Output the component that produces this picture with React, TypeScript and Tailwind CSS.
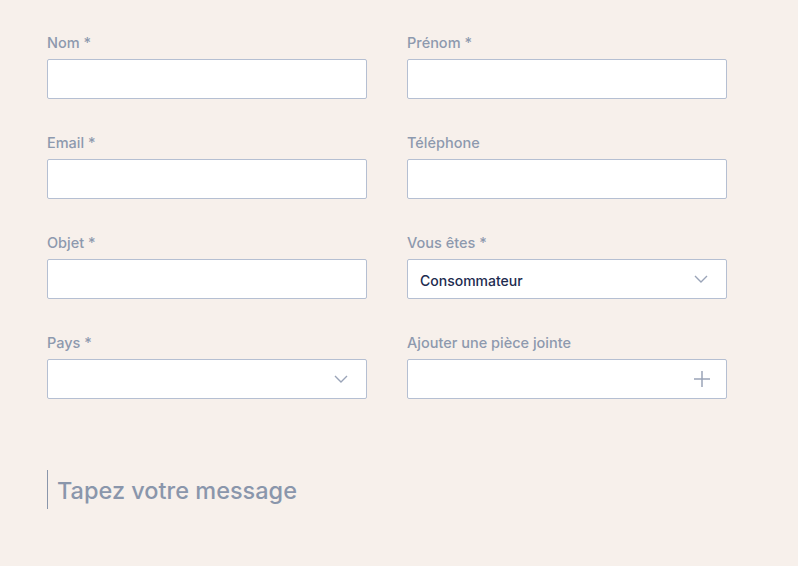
import React from "react";

const labelCls = "block h-5 mb-1.5 text-[14.5px] leading-5 font-medium text-[#8d99ae]";
const boxCls =
  "h-10 w-full bg-white border border-[#b5bfd2] rounded-[2px] flex items-center px-3";

function Field({ label, children }: { label: string; children?: React.ReactNode }) {
  return (
    <div className="flex flex-col">
      <span className={labelCls}>{label}</span>
      {children ?? <div className={boxCls} />}
    </div>
  );
}

function Chevron() {
  return (
    <svg width="14" height="8" viewBox="0 0 14 8" fill="none" className="ml-auto mr-[6px]">
      <path d="M1 1l6 6 6-6" stroke="#9aa4b8" strokeWidth="1.4" />
    </svg>
  );
}

function Plus() {
  return (
    <svg width="16" height="16" viewBox="0 0 16 16" fill="none" className="ml-auto mr-[4px]">
      <path d="M8 0v16M0 8h16" stroke="#9aa4b8" strokeWidth="1.5" />
    </svg>
  );
}

export default function App() {
  return (
    <div
      className="min-h-[566px] w-full bg-[#f7f0eb] pt-[33px] pl-[47px]"
      style={{ fontFamily: "Inter, 'Liberation Sans', sans-serif" }}
    >
      <div className="grid grid-cols-[320px_320px] gap-x-10 gap-y-[34px]">
        <Field label="Nom *" />
        <Field label="Prénom *" />
        <Field label="Email *" />
        <Field label="Téléphone" />
        <Field label="Objet *" />
        <Field label="Vous êtes *">
          <div className={boxCls}>
            <span className="text-[14px] leading-5 pt-[3px] font-medium text-[#1d2b4f]">Consommateur</span>
            <Chevron />
          </div>
        </Field>
        <Field label="Pays *">
          <div className={boxCls}>
            <Chevron />
          </div>
        </Field>
        <Field label="Ajouter une pièce jointe">
          <div className={boxCls}>
            <Plus />
          </div>
        </Field>
      </div>
      <div className="mt-[71px] flex items-center border-l border-[#8a96ab] h-[39px] pl-[9px]">
        <span className="text-[23.5px] leading-7 pt-[3px] font-medium text-[#8a96ab]">Tapez votre message</span>
      </div>
    </div>
  );
}
